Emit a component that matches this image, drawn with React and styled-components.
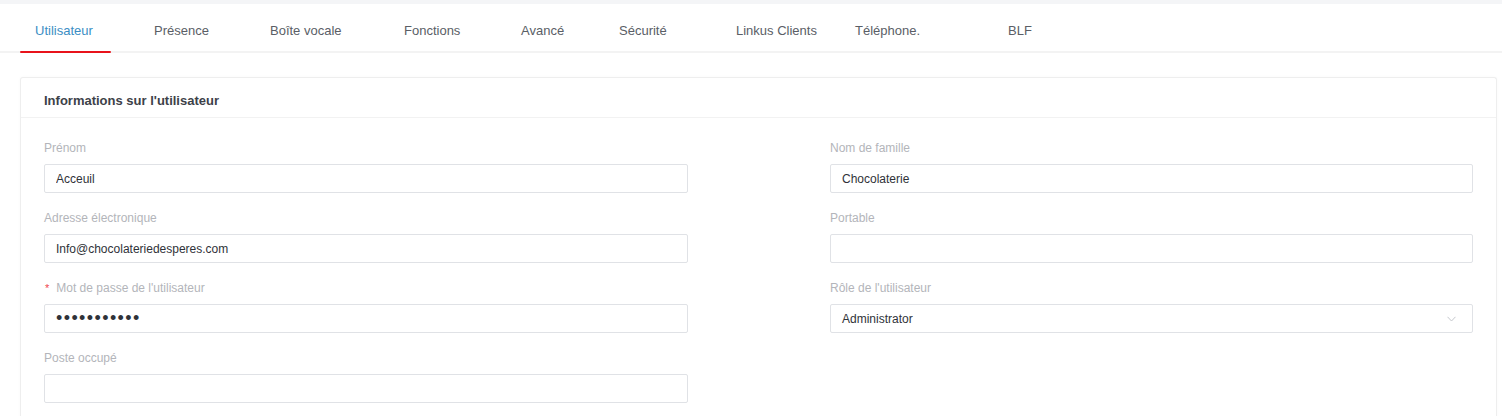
import React from 'react'
import styled, { createGlobalStyle } from 'styled-components'

const GlobalStyle = createGlobalStyle`
  * { box-sizing: border-box; }
  body {
    margin: 0;
    background: #ffffff;
    font-family: "Liberation Sans", Arial, sans-serif;
  }
`

const tabs = [
  { label: 'Utilisateur', width: 119, active: true },
  { label: 'Présence', width: 116 },
  { label: 'Boîte vocale', width: 134 },
  { label: 'Fonctions', width: 117 },
  { label: 'Avancé', width: 98 },
  { label: 'Sécurité', width: 117 },
  { label: 'Linkus Clients', width: 119 },
  { label: 'Téléphone.', width: 153 },
  { label: 'BLF', width: 80 },
]

const Page = styled.div`
  border-top: 4px solid #f4f5f7;
`

const TabBar = styled.div`
  display: flex;
  height: 49px;
  padding-left: 20px;
  border-bottom: 2px solid #f3f3f3;
`

const Tab = styled.div`
  position: relative;
  width: ${p => p.$w}px;
  padding: 6px 0 0 15px;
  display: flex;
  align-items: center;
  font-size: 13px;
  color: ${p => (p.$active ? '#3b8ec4' : '#5a5e66')};

  ${p => p.$active && `
    &::after {
      content: '';
      position: absolute;
      left: 0;
      bottom: -2px;
      width: 91px;
      height: 2px;
      background: #e8131b;
      border-radius: 1px;
    }
  `}
`

const Main = styled.div`
  padding: 24px 5px 0 20px;
`

const Card = styled.div`
  border: 1px solid #eeeeee;
  border-bottom: none;
  border-radius: 3px 3px 0 0;
  background: #fff;
  box-shadow: 0 0 3px rgba(0, 0, 0, 0.03);
`

const CardHeader = styled.div`
  height: 40px;
  padding: 6px 0 0 23px;
  display: flex;
  align-items: center;
  border-bottom: 1px solid #f2f2f2;
  font-size: 13px;
  font-weight: bold;
  color: #3d4148;
`

const FormGrid = styled.div`
  display: grid;
  grid-template-columns: 644px 643px;
  column-gap: 142px;
  padding: 20px 23px 0 23px;
`

const Field = styled.div`
  display: flex;
  flex-direction: column;
  margin-bottom: 15px;
`

const Label = styled.label`
  height: 20px;
  line-height: 20px;
  margin-bottom: 6px;
  font-size: 12px;
  color: #b3b5ba;
`

const Required = styled.span`
  color: #f0464f;
  font-size: 11px;
  margin: 0 7px 0 1px;
`

const Input = styled.input`
  height: 29px;
  width: 100%;
  padding: 0 11px;
  border: 1px solid #e0e2e6;
  border-radius: 2px;
  font-family: "Liberation Sans", Arial, sans-serif;
  font-size: ${p => (p.type === 'password' ? '18px' : '12px')};
  letter-spacing: ${p => (p.type === 'password' ? '1.4px' : 'normal')};
  color: #2f3238;
  background: #fff;
  outline: none;
`

const SelectBox = styled.div`
  height: 29px;
  display: flex;
  align-items: center;
  justify-content: space-between;
  padding: 0 16px 0 11px;
  border: 1px solid #e0e2e6;
  border-radius: 2px;
  font-size: 12px;
  color: #2f3238;
`

const Chevron = () => (
  <svg width="9" height="6" viewBox="0 0 9 6" fill="none">
    <path d="M0.5 0.8 L4.5 5 L8.5 0.8" stroke="#c4c7cc" strokeWidth="1" />
  </svg>
)

export default function App() {
  return (
    <Page>
      <GlobalStyle />
      <TabBar>
        {tabs.map(t => (
          <Tab key={t.label} $w={t.width} $active={t.active}>{t.label}</Tab>
        ))}
      </TabBar>

      <Main>
        <Card>
          <CardHeader>Informations sur l'utilisateur</CardHeader>
          <FormGrid>
            <Field>
              <Label>Prénom</Label>
              <Input defaultValue="Acceuil" />
            </Field>
            <Field>
              <Label>Nom de famille</Label>
              <Input defaultValue="Chocolaterie" />
            </Field>

            <Field>
              <Label>Adresse électronique</Label>
              <Input defaultValue="Info@chocolateriedesperes.com" />
            </Field>
            <Field>
              <Label>Portable</Label>
              <Input defaultValue="" />
            </Field>

            <Field>
              <Label><Required>*</Required>Mot de passe de l'utilisateur</Label>
              <Input type="password" defaultValue="motdepasse1" />
            </Field>
            <Field>
              <Label>Rôle de l'utilisateur</Label>
              <SelectBox>
                <span>Administrator</span>
                <Chevron />
              </SelectBox>
            </Field>

            <Field>
              <Label>Poste occupé</Label>
              <Input defaultValue="" />
            </Field>
          </FormGrid>
        </Card>
      </Main>
    </Page>
  )
}
